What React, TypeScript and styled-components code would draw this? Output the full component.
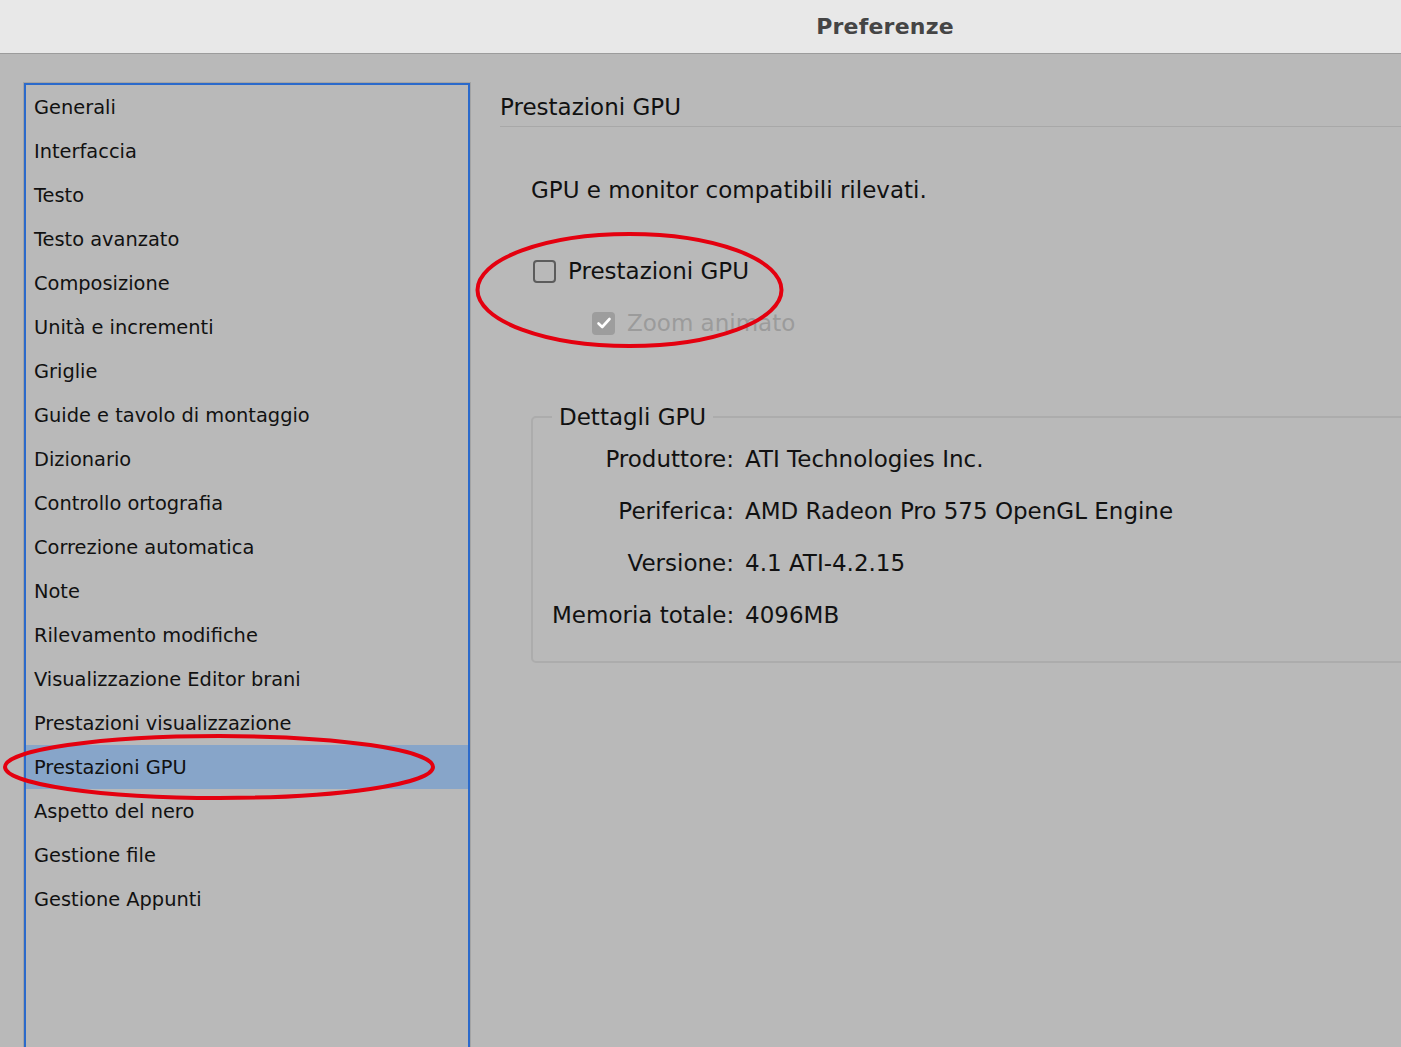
import React from "react"
import styled, { createGlobalStyle } from "styled-components"

const GlobalStyle = createGlobalStyle`
  html, body {
    margin: 0;
    padding: 0;
    background: #b9b9b9;
    overflow: hidden;
  }
  body {
    font-family: "DejaVu Sans", "Liberation Sans", sans-serif;
    color: #111;
  }
`

const Window = styled.div`
  position: relative;
  width: 1401px;
  height: 1047px;
  overflow: hidden;
  display: flex;
  flex-direction: column;
`

const TitleBar = styled.div`
  height: 53px;
  flex-shrink: 0;
  background: #e8e8e8;
  border-bottom: 1px solid #9c9c9c;
  display: flex;
  align-items: center;
  padding-left: 770px;
  box-sizing: content-box;
`

const Title = styled.h1`
  margin: 0;
  width: 230px;
  text-align: center;
  font-size: 22px;
  font-weight: bold;
  color: #454545;
  letter-spacing: 0.2px;
`

const Body = styled.div`
  flex: 1;
  display: flex;
  padding: 29px 0 0 24px;
  gap: 30px;
  min-height: 0;
`

const Sidebar = styled.ul`
  list-style: none;
  margin: 0;
  padding: 0;
  width: 446px;
  flex-shrink: 0;
  box-sizing: border-box;
  border: 2px solid #2b6acb;
  box-shadow: 0 0 0 1px #a4a4a4;
  height: 1100px;
`

const Item = styled.li<{ $active?: boolean }>`
  height: 44px;
  display: flex;
  align-items: center;
  padding-left: 8px;
  font-size: 19.4px;
  background: ${p => (p.$active ? "#87a5c9" : "transparent")};
`

const Panel = styled.div`
  flex: 1;
  display: flex;
  flex-direction: column;
  margin-right: -20px;
`

const Heading = styled.h2`
  margin: 0;
  padding: 9px 0 4px;
  line-height: 30px;
  font-size: 23px;
  font-weight: normal;
  border-bottom: 1px solid #a8a8a8;
`

const Content = styled.div`
  padding-left: 31px;
  display: flex;
  flex-direction: column;
`

const Status = styled.p`
  margin: 47px 0 0;
  font-size: 23px;
  line-height: 32px;
`

const CheckRow = styled.label<{ $indent?: number; $disabled?: boolean }>`
  display: flex;
  align-items: center;
  gap: 12px;
  height: 32px;
  padding-left: ${p => p.$indent ?? 2}px;
  font-size: 23px;
  color: ${p => (p.$disabled ? "#9b9b9b" : "#111")};
`

const Box = styled.span<{ $checked?: boolean }>`
  width: 23px;
  height: 23px;
  box-sizing: border-box;
  border-radius: 4px;
  border: ${p => (p.$checked ? "none" : "2px solid #5c5c5c")};
  background: ${p => (p.$checked ? "#9d9d9d" : "transparent")};
  display: flex;
  align-items: center;
  justify-content: center;
`

const CheckGroup = styled.div`
  display: flex;
  flex-direction: column;
  gap: 20px;
  margin-top: 49px;
`

const Details = styled.fieldset`
  margin: 64px 0 0;
  padding: 2px 0 20px 19px;
  border: 2px solid #acacac;
  border-radius: 5px;
  min-width: 0;
`

const Legend = styled.legend`
  margin-left: 0;
  padding: 0 7px;
  font-size: 23px;
  line-height: 28px;
`

const InfoGrid = styled.dl`
  margin: 0;
  display: grid;
  grid-template-columns: 182px auto;
  column-gap: 11px;
  grid-auto-rows: 52px;
  align-items: center;
  font-size: 23px;
`

const Label = styled.dt`
  text-align: right;
  white-space: nowrap;
`

const Value = styled.dd`
  margin: 0;
  white-space: nowrap;
`

const Marks = styled.svg`
  position: absolute;
  left: 0;
  top: 0;
  pointer-events: none;
`

const sections = [
  "Generali",
  "Interfaccia",
  "Testo",
  "Testo avanzato",
  "Composizione",
  "Unità e incrementi",
  "Griglie",
  "Guide e tavolo di montaggio",
  "Dizionario",
  "Controllo ortografia",
  "Correzione automatica",
  "Note",
  "Rilevamento modifiche",
  "Visualizzazione Editor brani",
  "Prestazioni visualizzazione",
  "Prestazioni GPU",
  "Aspetto del nero",
  "Gestione file",
  "Gestione Appunti",
]

const details = [
  ["Produttore:", "ATI Technologies Inc."],
  ["Periferica:", "AMD Radeon Pro 575 OpenGL Engine"],
  ["Versione:", "4.1 ATI-4.2.15"],
  ["Memoria totale:", "4096MB"],
]

export default function App() {
  return (
    <Window>
      <GlobalStyle />
      <TitleBar>
        <Title>Preferenze</Title>
      </TitleBar>
      <Body>
        <Sidebar>
          {sections.map(s => (
            <Item key={s} $active={s === "Prestazioni GPU"}>
              {s}
            </Item>
          ))}
        </Sidebar>
        <Panel>
          <Heading>Prestazioni GPU</Heading>
          <Content>
            <Status>GPU e monitor compatibili rilevati.</Status>
            <CheckGroup>
              <CheckRow>
                <Box />
                Prestazioni GPU
              </CheckRow>
              <CheckRow $indent={61} $disabled>
                <Box $checked>
                  <svg width="16" height="14" viewBox="0 0 16 14">
                    <path d="M2.5 7.5 L6.2 11 L13.5 3" fill="none" stroke="#fff" strokeWidth="2.6" strokeLinecap="round" strokeLinejoin="round" />
                  </svg>
                </Box>
                Zoom animato
              </CheckRow>
            </CheckGroup>
            <Details>
              <Legend>Dettagli GPU</Legend>
              <InfoGrid>
                {details.map(([k, v]) => (
                  <React.Fragment key={k}>
                    <Label>{k}</Label>
                    <Value>{v}</Value>
                  </React.Fragment>
                ))}
              </InfoGrid>
            </Details>
          </Content>
        </Panel>
      </Body>
      <Marks width="1401" height="1047" viewBox="0 0 1401 1047">
        <ellipse cx="219" cy="767" rx="214" ry="31" fill="none" stroke="#e4000f" strokeWidth="4" />
        <ellipse cx="629.5" cy="290" rx="152" ry="56" fill="none" stroke="#e4000f" strokeWidth="4" />
      </Marks>
    </Window>
  )
}
